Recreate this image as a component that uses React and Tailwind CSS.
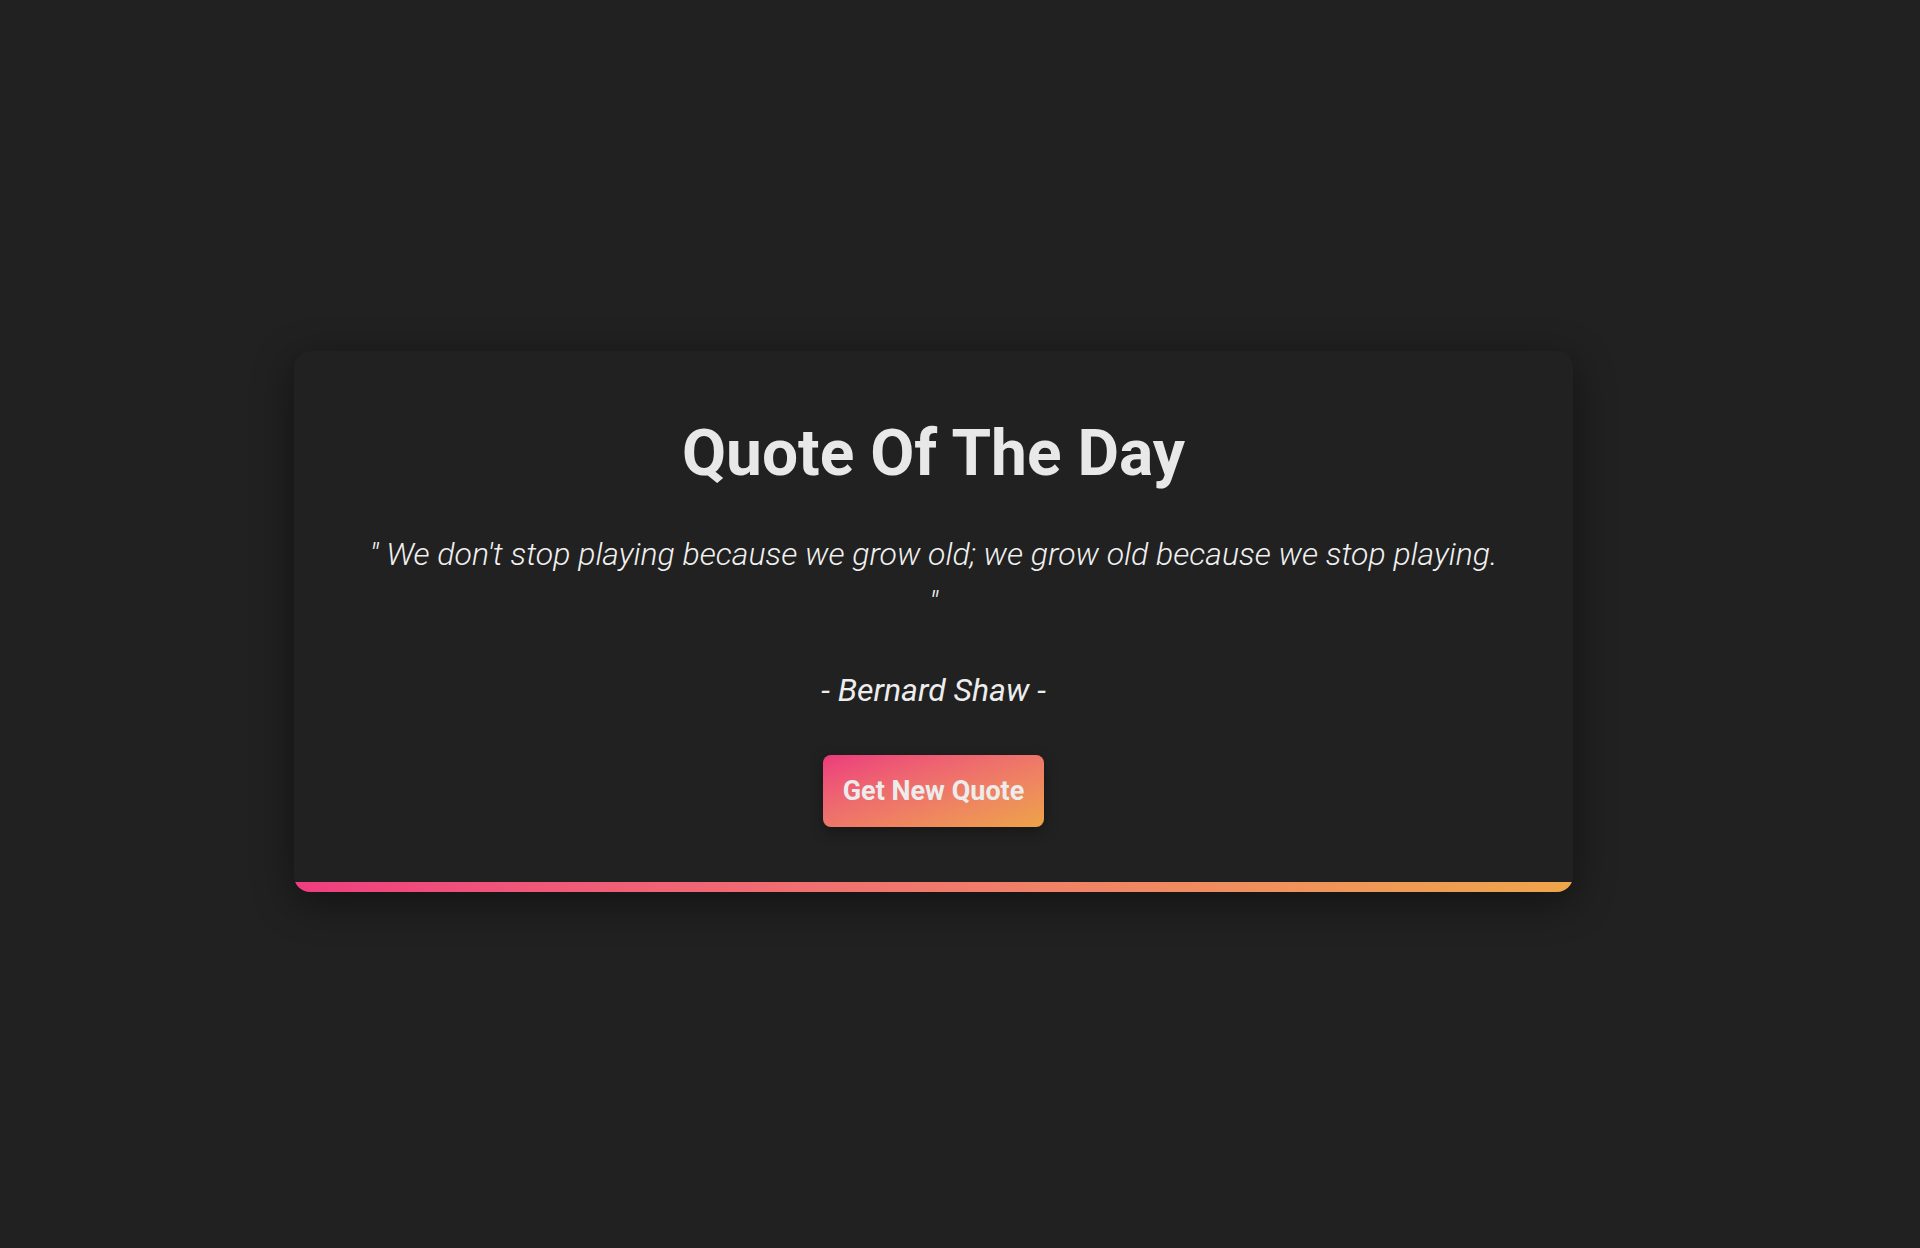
// Quote of the day card
const quote = {
  text: "We don't stop playing because we grow old; we grow old because we stop playing.",
  author: "Bernard Shaw",
};

const App = () => {
  return (
    <div
      className="min-h-screen bg-[#212121] flex flex-col pt-[351px]"
      style={{ fontFamily: "Roboto, 'Open Sans', sans-serif" }}
    >
      <div className="ml-[294px] w-[1279px] bg-[#212121] rounded-2xl overflow-hidden flex flex-col shadow-[0_10px_40px_rgba(0,0,0,0.45)]">
        <div className="flex flex-col items-center pt-[65px] pb-[55px] px-[64px]">
          <h1 className="text-[64px] leading-[1.2] font-bold text-[#e8e8e8]">Quote Of The Day</h1>
          <p className="mt-[37px] w-[1140px] text-center text-[32px] leading-[1.5] font-light italic text-[#f0f0f0]">
            " {quote.text} "
          </p>
          <p className="mt-[40px] text-[32px] leading-[1.5] italic text-[#ededed]">
            - {quote.author} -
          </p>
          <button className="mt-[41px] px-[20px] py-[20px] rounded-lg bg-gradient-to-br from-[#ec3a7c] to-[#eda347] text-[27px] leading-[32px] font-bold text-[#ececec] shadow-[0_4px_14px_rgba(0,0,0,0.35)] cursor-pointer">
            Get New Quote
          </button>
        </div>
        <div className="h-[10px] bg-gradient-to-r from-[#ef3d7f] to-[#eea54a]" />
      </div>
    </div>
  );
};

export default App;
